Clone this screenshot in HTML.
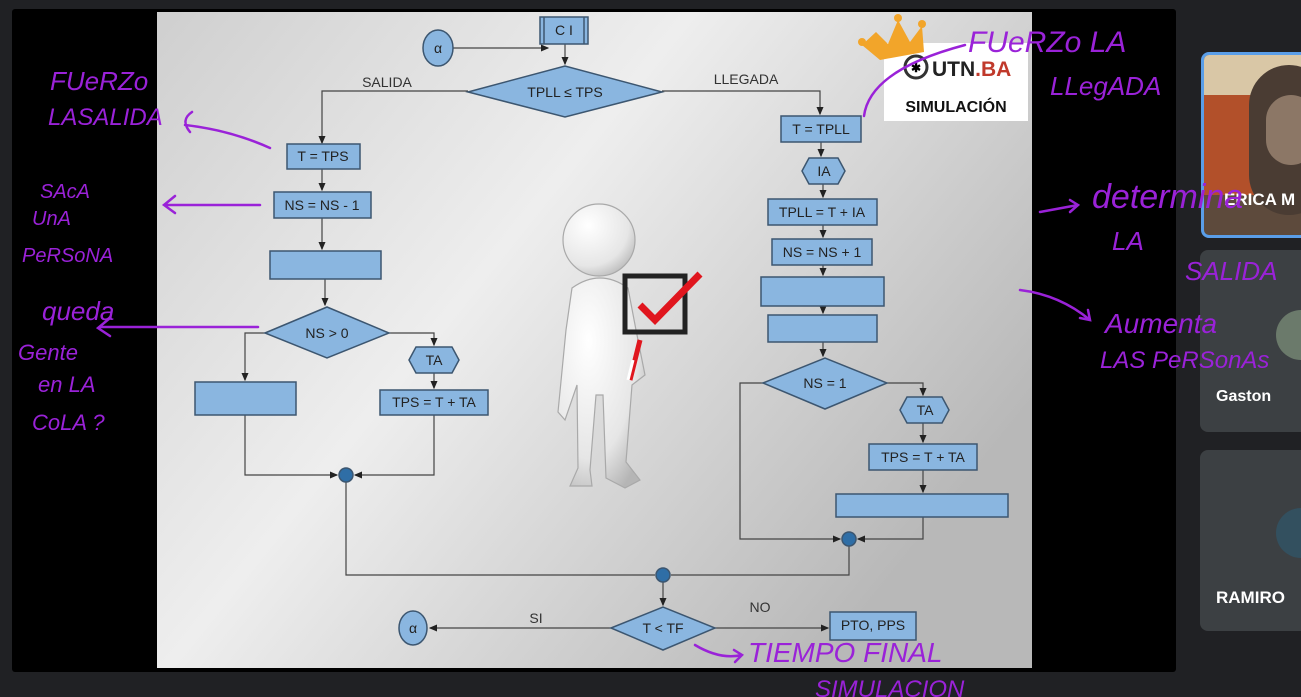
<!DOCTYPE html>
<html><head><meta charset="utf-8"><style>
body{margin:0;width:1301px;height:697px;background:#202124;overflow:hidden;position:relative;font-family:"Liberation Sans",sans-serif}
.tile{position:absolute;background:#3c4043;border-radius:8px;overflow:hidden}
.nm{position:absolute;color:#fff;font-weight:bold;font-size:17px}
</style></head><body>
<div style="position:absolute;left:12px;top:9px;width:1164px;height:663px;background:#000;border-radius:3px"></div>
<div class="tile" style="left:1201px;top:52px;width:110px;height:180px;border:3px solid #5a9ee8;background:#5d4a3c">
 <div style="position:absolute;left:0;top:0;width:110px;height:40px;background:#d9c7a6"></div>
 <div style="position:absolute;left:0;top:40px;width:50px;height:100px;background:#b2502a"></div>
 <div style="position:absolute;left:45px;top:10px;width:80px;height:150px;background:#4a3c33;border-radius:40px"></div>
 <div style="position:absolute;left:62px;top:40px;width:50px;height:70px;background:#8c7766;border-radius:25px"></div>
 <div class="nm" style="left:20px;top:135px">ERICA M</div></div>
<div class="tile" style="left:1200px;top:250px;width:110px;height:182px">
 <div style="position:absolute;left:76px;top:60px;width:50px;height:50px;border-radius:50%;background:#6b7a6b"></div>
 <div class="nm" style="left:16px;top:138px;font-size:16px">Gaston </div></div>
<div class="tile" style="left:1200px;top:450px;width:110px;height:181px">
 <div style="position:absolute;left:76px;top:58px;width:50px;height:50px;border-radius:50%;background:#33505f"></div>
 <div class="nm" style="left:16px;top:138px">RAMIRO</div></div>

<svg width="1301" height="697" style="position:absolute;left:0;top:0" font-family="Liberation Sans,sans-serif">
<defs>
<linearGradient id="bg" x1="0" y1="0" x2="1" y2="0.6"><stop offset="0" stop-color="#cfcfcf"/><stop offset="0.45" stop-color="#eeeeee"/><stop offset="1" stop-color="#b8b8b8"/></linearGradient>
<radialGradient id="fg" cx="0.35" cy="0.3" r="0.8"><stop offset="0" stop-color="#ffffff"/><stop offset="0.7" stop-color="#e6e6e6"/><stop offset="1" stop-color="#b5b5b5"/></radialGradient>
<marker id="a" markerWidth="8" markerHeight="8" refX="6" refY="4" orient="auto"><path d="M0,1 L7,4 L0,7z" fill="#222"/></marker>
</defs>
<rect x="157" y="12" width="875" height="656" fill="url(#bg)"/>
<g fill="#8ab6e0" stroke="#3c5670" stroke-width="1.5" font-size="14" text-anchor="middle">
<g fill="none" stroke="#444" stroke-width="1.2">
<path d="M453,48 H548" marker-end="url(#a)"/><path d="M565,44 V64" marker-end="url(#a)"/>
<path d="M468,91 H322 V143" marker-end="url(#a)"/><path d="M662,91 H820 V114" marker-end="url(#a)"/>
<path d="M322,169 V190" marker-end="url(#a)"/><path d="M322,218 V249" marker-end="url(#a)"/><path d="M325,279 V305" marker-end="url(#a)"/>
<path d="M265,333 H245 V380" marker-end="url(#a)"/><path d="M389,333 H434 V345" marker-end="url(#a)"/><path d="M434,373 V388" marker-end="url(#a)"/>
<path d="M245,415 V475 H337" marker-end="url(#a)"/><path d="M434,415 V475 H355" marker-end="url(#a)"/>
<path d="M346,482 V575 H655"/>
<path d="M821,142 V156" marker-end="url(#a)"/><path d="M823,184 V197" marker-end="url(#a)"/><path d="M823,225 V237" marker-end="url(#a)"/><path d="M823,265 V275" marker-end="url(#a)"/><path d="M823,306 V313" marker-end="url(#a)"/><path d="M823,342 V356" marker-end="url(#a)"/>
<path d="M763,383 H740 V539 H840" marker-end="url(#a)"/><path d="M887,383 H923 V395" marker-end="url(#a)"/><path d="M923,423 V442" marker-end="url(#a)"/><path d="M923,470 V492" marker-end="url(#a)"/><path d="M923,517 V539 H858" marker-end="url(#a)"/>
<path d="M849,546 V575 H671"/><path d="M663,582 V605" marker-end="url(#a)"/>
<path d="M611,628 H430" marker-end="url(#a)"/><path d="M715,628 H828" marker-end="url(#a)"/>
</g>
<ellipse cx="438" cy="48" rx="15" ry="18"/><text x="438" y="53" fill="#222" stroke="none">α</text>
<rect x="540" y="17" width="48" height="27"/><path d="M544,17 V44 M584,17 V44" fill="none"/><text x="564" y="35" fill="#222" stroke="none">C I</text>
<path d="M468,92 L565,66 L662,92 L565,117z"/><text x="565" y="97" fill="#222" stroke="none">TPLL ≤ TPS</text>
<rect x="287" y="144" width="73" height="25"/><text x="323" y="161" fill="#222" stroke="none">T = TPS</text>
<rect x="274" y="192" width="97" height="26"/><text x="322" y="210" fill="#222" stroke="none">NS = NS - 1</text>
<rect x="270" y="251" width="111" height="28"/>
<path d="M265,333 L327,307 L389,333 L327,358z"/><text x="327" y="338" fill="#222" stroke="none">NS &gt; 0</text>
<rect x="195" y="382" width="101" height="33"/>
<path d="M409,360 L416,347 H452 L459,360 L452,373 H416z"/><text x="434" y="365" fill="#222" stroke="none">TA</text>
<rect x="380" y="390" width="108" height="25"/><text x="434" y="407" fill="#222" stroke="none">TPS = T + TA</text>
<circle cx="346" cy="475" r="7" fill="#2f6ea6"/><circle cx="663" cy="575" r="7" fill="#2f6ea6"/><circle cx="849" cy="539" r="7" fill="#2f6ea6"/>
<rect x="781" y="116" width="80" height="26"/><text x="821" y="134" fill="#222" stroke="none">T = TPLL</text>
<path d="M802,171 L809,158 H838 L845,171 L838,184 H809z"/><text x="824" y="176" fill="#222" stroke="none">IA</text>
<rect x="768" y="199" width="109" height="26"/><text x="822" y="217" fill="#222" stroke="none">TPLL = T + IA</text>
<rect x="772" y="239" width="100" height="26"/><text x="822" y="257" fill="#222" stroke="none">NS = NS + 1</text>
<rect x="761" y="277" width="123" height="29"/><rect x="768" y="315" width="109" height="27"/>
<path d="M763,383 L825,358 L887,383 L825,409z"/><text x="825" y="388" fill="#222" stroke="none">NS = 1</text>
<path d="M900,410 L907,397 H942 L949,410 L942,423 H907z"/><text x="925" y="415" fill="#222" stroke="none">TA</text>
<rect x="869" y="444" width="108" height="26"/><text x="923" y="462" fill="#222" stroke="none">TPS = T + TA</text>
<rect x="836" y="494" width="172" height="23"/>
<path d="M611,628 L663,607 L715,628 L663,650z"/><text x="663" y="633" fill="#222" stroke="none">T &lt; TF</text>
<ellipse cx="413" cy="628" rx="14" ry="17"/><text x="413" y="633" fill="#222" stroke="none">α</text>
<rect x="830" y="612" width="86" height="28"/><text x="873" y="630" fill="#222" stroke="none">PTO, PPS</text>
</g>
<g font-size="14" fill="#333" text-anchor="middle"><text x="387" y="87">SALIDA</text><text x="746" y="84">LLEGADA</text><text x="536" y="623">SI</text><text x="760" y="612">NO</text></g>
<!-- logo -->
<rect x="884" y="43" width="144" height="78" fill="#fff"/>
<g fill="#f2a52a"><path d="M862,45 L876,32 L888,44 L898,20 L910,42 L922,26 L924,52 L880,60z"/><circle cx="862" cy="42" r="4"/><circle cx="898" cy="18" r="4"/><circle cx="922" cy="24" r="4"/></g>
<circle cx="916" cy="67" r="11" fill="none" stroke="#333" stroke-width="3"/><text x="916" y="72" font-size="12" text-anchor="middle" font-weight="bold">✱</text>
<text x="932" y="76" font-size="21" font-weight="bold" fill="#222">UTN<tspan fill="#c0392b">.BA</tspan></text>
<text x="956" y="112" font-size="16" font-weight="bold" text-anchor="middle" fill="#111">SIMULACIÓN</text>
<!-- figure -->
<g fill="url(#fg)" stroke="#a9a9a9" stroke-width="1.2">
<path d="M572,288 Q600,268 628,288 L636,330 L645,375 L632,385 L626,462 L640,480 L625,488 L606,478 L603,395 L596,395 L590,470 L592,486 L570,486 L578,468 L577,385 L565,420 L558,412 L566,330z"/>
<circle cx="599" cy="240" r="36"/>
</g>
<rect x="625" y="276" width="60" height="56" fill="none" stroke="#222" stroke-width="5"/>
<path d="M640,305 L655,320 L700,274" fill="none" stroke="#e0161e" stroke-width="7"/>
<path d="M640,340 L630,380" stroke="#e0161e" stroke-width="5"/>
<path d="M633,360 L628,380" stroke="#fff" stroke-width="3"/>
<!-- handwriting -->
<g fill="none" stroke="#9a22d8" stroke-width="2.5" stroke-linecap="round">
<path d="M270,148 Q230,130 185,125 M192,112 Q180,120 190,132"/>
<path d="M260,205 H165 M175,196 L164,205 L175,213"/>
<path d="M258,327 H100 M110,318 L98,328 L110,336"/>
<path d="M864,116 Q870,70 965,45"/>
<path d="M1040,212 L1078,205 M1070,200 L1078,205 L1070,212"/>
<path d="M1020,290 Q1060,295 1090,320 M1080,318 L1090,320 L1088,310"/>
<path d="M695,645 Q720,660 742,655 M734,650 L742,655 L735,662"/>
</g>
<g fill="#9a22d8" font-size="24" font-style="italic">
<text x="50" y="90" font-size="26">FUeRZo</text><text x="48" y="125" font-size="24">LASALIDA</text>
<text x="40" y="198" font-size="20">SAcA</text><text x="32" y="225" font-size="20">UnA</text><text x="22" y="262" font-size="20">PeRSoNA</text>
<text x="42" y="320" font-size="26">queda</text><text x="18" y="360" font-size="22">Gente</text><text x="38" y="392" font-size="22">en LA</text><text x="32" y="430" font-size="22">CoLA ?</text>
<text x="968" y="52" font-size="30">FUeRZo LA</text><text x="1050" y="95" font-size="26">LLegADA</text>
<text x="1092" y="208" font-size="34">determina</text><text x="1112" y="250" font-size="26">LA</text><text x="1185" y="280" font-size="26">SALIDA</text>
<text x="1105" y="333" font-size="28">Aumenta</text><text x="1100" y="368" font-size="24">LAS PeRSonAs</text>
<text x="748" y="662" font-size="28">TIEMPO FINAL</text><text x="815" y="697" font-size="24">SIMULACION</text>
</g>
</svg>
</body></html>
